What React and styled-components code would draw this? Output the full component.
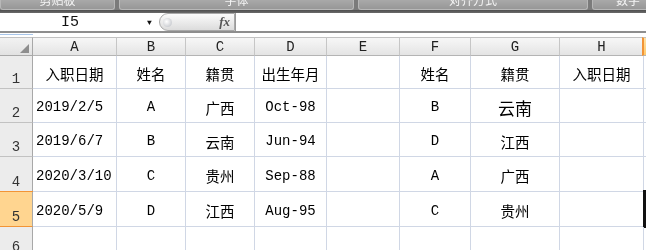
import React from 'react'
import styled, { createGlobalStyle } from 'styled-components'

const Global = createGlobalStyle`
  html, body { margin: 0; padding: 0; background: #fff; overflow: hidden; }
  body { width: 646px; height: 250px; }
`

const cols = ['A', 'B', 'C', 'D', 'E', 'F', 'G', 'H', 'I']
const widths = '33px 84px 69px 69px 72px 73px 71px 89px 84px 60px'
const heights = [33, 34, 34, 35, 35, 30]

const rows = [
  [['入职日期', 'c'], ['姓名', 'c'], ['籍贯', 'c'], ['出生年月', 'c'], [''], ['姓名', 'c'], ['籍贯', 'c'], ['入职日期', 'c']],
  [['2019/2/5', 'l'], ['A', 'c'], ['广西', 'c'], ['Oct-98', 'c'], [''], ['B', 'c'], ['云南', 'c', true], ['']],
  [['2019/6/7', 'l'], ['B', 'c'], ['云南', 'c'], ['Jun-94', 'c'], [''], ['D', 'c'], ['江西', 'c'], ['']],
  [['2020/3/10', 'l'], ['C', 'c'], ['贵州', 'c'], ['Sep-88', 'c'], [''], ['A', 'c'], ['广西', 'c'], ['']],
  [['2020/5/9', 'l'], ['D', 'c'], ['江西', 'c'], ['Aug-95', 'c'], [''], ['C', 'c'], ['贵州', 'c'], ['']],
  [[''], [''], [''], [''], [''], [''], [''], ['']],
]

const isCjk = (t) => /[\u4e00-\u9fff]/.test(t)

const App = () => {
  return (
    <>
      <Global />
      <Page>
        <Ribbon>
          <RibbonGroup $w={113}><span>剪贴板</span></RibbonGroup>
          <RibbonGroup $w={233}><span>字体</span></RibbonGroup>
          <RibbonGroup $w={228}><span>对齐方式</span></RibbonGroup>
          <RibbonGroup $w={70}><span>数字</span></RibbonGroup>
        </Ribbon>
        <DarkBand />
        <FormulaBar>
          <NameBox>I5</NameBox>
          <DropArrow>▼</DropArrow>
          <FxPill>
            <Knob />
            <Fx>fx</Fx>
          </FxPill>
          <FormulaInput />
        </FormulaBar>
        <Spacer><BlueTick /></Spacer>
        <Viewport>
          <Sheet>
            <Corner>
              <svg width="9" height="9" viewBox="0 0 9 9"><polygon points="9,0 9,9 0,9" fill="#8e8e8e" /></svg>
            </Corner>
            {cols.map((c) => (
              <ColHead key={c} $sel={c === 'I'}>{c === 'I' ? '' : c}</ColHead>
            ))}
            {rows.map((r, i) => (
              <React.Fragment key={i}>
                <RowHead $h={heights[i]} $sel={i === 4}>{i + 1}</RowHead>
                {r.map(([t, a, big], j) => (
                  <Cell key={j} $h={heights[i]} $align={a} $big={big} $cjk={isCjk(t)}>{t}</Cell>
                ))}
                <Cell $h={heights[i]} $active={i === 4} />
              </React.Fragment>
            ))}
          </Sheet>
        </Viewport>
      </Page>
    </>
  )
}

const Page = styled.div`
  width: 646px;
  display: flex;
  flex-direction: column;
  font-family: "Liberation Mono", "Noto Sans CJK SC", monospace;
  will-change: transform;
`

const Ribbon = styled.div`
  height: 10px;
  background: #7b7b7b;
  display: flex;
  gap: 4px;
  overflow: hidden;
`

const RibbonGroup = styled.div`
  width: ${(p) => p.$w}px;
  flex: none;
  height: 9px;
  background: linear-gradient(#a9a9a9, #979797);
  border: 1px solid #b8b8b8;
  border-top: none;
  border-radius: 0 0 3px 3px;
  display: flex;
  justify-content: center;
  overflow: hidden;
  span {
    margin-top: -8px;
    font-family: "Noto Sans CJK SC", sans-serif;
    font-size: 12px;
    line-height: 16px;
    color: #f4f4f4;
  }
`

const DarkBand = styled.div`
  height: 3px;
  background: linear-gradient(#4e4e4e, #6a6a6a);
`

const FormulaBar = styled.div`
  height: 18px;
  display: flex;
  align-items: stretch;
  background: #fff;
  border-bottom: 2px solid #8e8e8e;
`

const NameBox = styled.div`
  width: 140px;
  display: flex;
  align-items: center;
  justify-content: center;
  font-size: 15px;
  color: #111;
`

const DropArrow = styled.div`
  width: 19px;
  font-size: 8px;
  color: #111;
  display: flex;
  align-items: center;
  justify-content: center;
`

const FxPill = styled.div`
  width: 76px;
  box-sizing: border-box;
  border: 1px solid #a9a9a9;
  border-radius: 9px 0 0 9px;
  background: linear-gradient(#fbfbfb, #dcdcdc);
  display: flex;
  align-items: center;
  justify-content: space-between;
  padding: 0 4px 0 3px;
`

const Knob = styled.div`
  width: 9px;
  height: 9px;
  border-radius: 50%;
  background: radial-gradient(circle at 40% 40%, #ffffff, #b9bcc2);
`

const Fx = styled.span`
  font-family: "Liberation Serif", serif;
  font-style: italic;
  font-weight: bold;
  font-size: 13px;
  color: #555;
`

const FormulaInput = styled.div`
  flex: 1;
  border-left: 1px solid #9a9a9a;
`

const Spacer = styled.div`
  height: 4px;
`

const BlueTick = styled.div`
  width: 33px;
  height: 1px;
  margin-top: 1px;
  background: #a8c6ea;
`

const Viewport = styled.div`
  width: 646px;
  overflow: hidden;
`

const Sheet = styled.div`
  display: grid;
  grid-template-columns: ${widths};
  grid-template-rows: 19px;
  width: 706px;
`

const Corner = styled.div`
  box-sizing: border-box;
  background: linear-gradient(#f2f2f2, #e2e2e2);
  border-top: 1px solid #c2c2c2;
  border-right: 1px solid #a8a8a8;
  border-bottom: 1px solid #a8a8a8;
  display: flex;
  align-items: flex-end;
  justify-content: flex-end;
  padding: 0 3px 2px 0;
`

const ColHead = styled.div`
  box-sizing: border-box;
  height: 19px;
  background: ${(p) => (p.$sel ? 'linear-gradient(#ffe3a8, #ffc96b)' : 'linear-gradient(#f7f7f7, #e4e4e4)')};
  border-top: 1px solid #c2c2c2;
  border-right: 1px solid #c6c6c6;
  border-bottom: 1px solid #b4b4b4;
  border-left: ${(p) => (p.$sel ? '2px solid #f29436' : 'none')};
  margin-left: ${(p) => (p.$sel ? '-2px' : '0')};
  display: flex;
  align-items: center;
  justify-content: center;
  font-size: 14px;
  color: #222;
  padding-top: 1px;
`

const RowHead = styled.div`
  box-sizing: border-box;
  height: ${(p) => p.$h}px;
  background: ${(p) => (p.$sel ? '#ffd590' : '#ececec')};
  border-right: 1px solid #a8a8a8;
  border-bottom: 1px solid ${(p) => (p.$sel ? '#f29436' : '#c2c2c2')};
  box-shadow: ${(p) => (p.$sel ? '0 -1px 0 #f29436' : 'none')};
  display: flex;
  align-items: flex-end;
  justify-content: center;
  padding-bottom: 1px;
  font-size: 14px;
  color: #333;
  line-height: 16px;
`

const Cell = styled.div`
  position: relative;
  box-sizing: border-box;
  height: ${(p) => p.$h}px;
  border-right: 1px solid #d0d7e5;
  border-bottom: 1px solid #d0d7e5;
  display: flex;
  align-items: center;
  justify-content: ${(p) => (p.$align === 'l' ? 'flex-start' : 'center')};
  padding: 3px 0 0 ${(p) => (p.$align === 'l' ? '3px' : '0')};
  font-family: ${(p) => (p.$cjk ? '"Noto Sans CJK SC", sans-serif' : 'inherit')};
  font-size: ${(p) => (p.$big ? '17px' : p.$cjk ? '14.5px' : '14px')};
  color: #000;
  white-space: nowrap;
  &::after {
    content: '';
    display: ${(p) => (p.$active ? 'block' : 'none')};
    position: absolute;
    left: -1px;
    top: -2px;
    bottom: -2px;
    width: 3px;
    background: #111;
  }
`

export default App
